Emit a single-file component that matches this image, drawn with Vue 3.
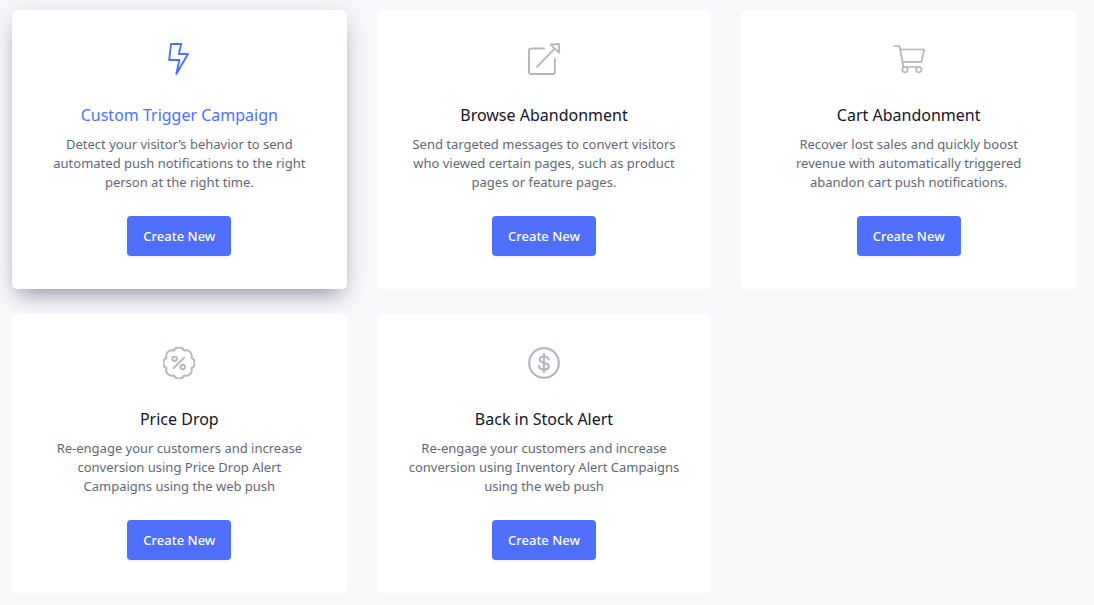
<script setup>
const campaigns = [
  { id: 'trigger', title: 'Custom Trigger Campaign', text: 'Detect your visitor’s behavior to send automated push notifications to the right person at the right time.', active: true },
  { id: 'browse', title: 'Browse Abandonment', text: 'Send targeted messages to convert visitors who viewed certain pages, such as product pages or feature pages.' },
  { id: 'cart', title: 'Cart Abandonment', text: 'Recover lost sales and quickly boost revenue with automatically triggered abandon cart push notifications.' },
  { id: 'price', title: 'Price Drop', text: 'Re-engage your customers and increase conversion using Price Drop Alert Campaigns using the web push' },
  { id: 'stock', title: 'Back in Stock Alert', text: 'Re-engage your customers and increase conversion using Inventory Alert Campaigns using the web push' },
]
</script>

<template>
  <main class="grid">
    <article v-for="c in campaigns" :key="c.id" class="card" :class="{ active: c.active }">
      <svg class="icon" viewBox="0 0 32 32" aria-hidden="true">
        <path v-if="c.id === 'trigger'" d="M8 1H18.2L15.8 11H25L13.3 31L16.4 17H6.2Z" />
        <g v-else-if="c.id === 'browse'">
          <path d="M16 5.5H3Q1 5.5 1 7.5V29Q1 31 3 31H24.8Q26.8 31 26.8 29V16" />
          <path d="M9 23.8L26.6 5.6M22.6 1.6L31 1V9.6Z" />
        </g>
        <g v-else-if="c.id === 'cart'" class="thin">
          <path d="M1 3H6.4L10.4 24H26M7.2 6.5H31.2L28.4 18.8H9.6" />
          <circle cx="12" cy="26.6" r="2.7" />
          <circle cx="25.8" cy="26.6" r="2.7" />
        </g>
        <g v-else-if="c.id === 'price'">
          <path d="M10.8 3.5A5.8 5.8 0 0 1 21.2 3.5A5.8 5.8 0 0 1 28.5 10.8A5.8 5.8 0 0 1 28.5 21.2A5.8 5.8 0 0 1 21.2 28.5A5.8 5.8 0 0 1 10.8 28.5A5.8 5.8 0 0 1 3.5 21.2A5.8 5.8 0 0 1 3.5 10.8A5.8 5.8 0 0 1 10.8 3.5Z" />
          <path d="M10.5 21.2L21.2 10.6" />
          <circle cx="11.6" cy="11.8" r="2.2" />
          <circle cx="19.8" cy="20" r="2.2" />
        </g>
        <g v-else class="bold">
          <circle cx="16" cy="16" r="14.8" />
          <path d="M20.6 12.4C20.2 10.4 18.4 9.5 16 9.5C13.4 9.5 11.6 10.7 11.6 12.6C11.6 17 20.8 14.6 20.8 19.3C20.8 21.3 18.8 22.6 16 22.6C13.2 22.6 11.3 21.4 11 19.2M16 7V25" />
        </g>
      </svg>
      <h2>{{ c.title }}</h2>
      <p>{{ c.text }}</p>
      <button type="button">Create New</button>
    </article>
  </main>
</template>

<style>
body {
  background: #f8f8fb;
}
</style>

<style scoped>
.grid {
  display: grid;
  grid-template-columns: repeat(3, 1fr);
  gap: 25px 30px;
  padding: 10px 18px 12px 12px;
  font-family: "Noto Sans", "Open Sans", sans-serif;
}
.card {
  display: flex;
  flex-direction: column;
  align-items: center;
  padding: 33px 32px;
  background: #fff;
  border-radius: 5px;
  text-align: center;
}
.card.active {
  box-shadow: 0 12px 20px -6px rgba(40, 38, 70, 0.38), 0 2px 24px rgba(60, 55, 110, 0.12);
}
.icon {
  width: 32px;
  height: 32px;
  fill: none;
  stroke: #b5b5c3;
  stroke-width: 1.9;
  stroke-linejoin: round;
  stroke-linecap: round;
}
.active .icon {
  stroke: #4f6fff;
}
.thin {
  stroke-width: 1.7;
}
.bold {
  stroke-width: 2.2;
}
h2 {
  margin: 28px 0 8px;
  font-size: 16px;
  line-height: 24px;
  font-weight: 400;
  color: #14142b;
}
.active h2 {
  color: #4f6fff;
}
p {
  margin: 0 0 24px;
  max-width: 271px;
  font-size: 13px;
  line-height: 19px;
  color: #646777;
}
button {
  height: 40px;
  padding: 0 16px;
  border: 0;
  border-radius: 4px;
  background: #4f6fff;
  box-shadow: 0 2px 2px rgba(0, 0, 0, 0.05);
  color: #fff;
  font-family: inherit;
  font-size: 13px;
  font-weight: 500;
  cursor: pointer;
}
</style>
